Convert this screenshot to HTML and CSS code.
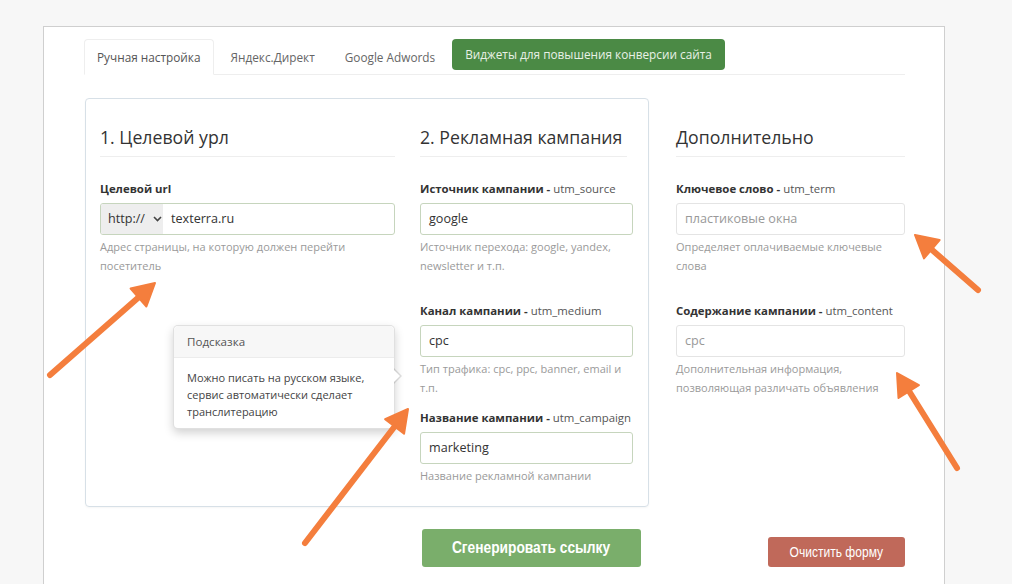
FILE: index.html
```html
<!DOCTYPE html>
<html lang="ru">
<head>
<meta charset="utf-8">
<title>UTM</title>
<link rel="stylesheet" href="styles.css">
</head>
<body>
<div class="card">
  <nav class="tabs">
    <a class="tab active">Ручная настройка</a>
    <a class="tab">Яндекс.Директ</a>
    <a class="tab">Google Adwords</a>
    <a class="tab-btn">Виджеты для повышения конверсии сайта</a>
  </nav>

  <div class="main">
    <div class="box">
      <div class="col col1">
        <h2 class="title">1. Целевой урл</h2>
        <div class="group">
          <div class="label"><b>Целевой url</b></div>
          <div class="input-group">
            <div class="addon">http://
              <svg class="chev" width="9" height="6" viewBox="0 0 9 6"><path d="M1 1l3.5 3.5L8 1" fill="none" stroke="#444" stroke-width="1.6"/></svg>
            </div>
            <div class="field">texterra.ru</div>
          </div>
          <div class="help">Адрес страницы, на которую должен перейти посетитель</div>
        </div>
        <div class="popover">
          <div class="pop-head">Подсказка</div>
          <div class="pop-body">Можно писать на русском языке, сервис автоматически сделает транслитерацию</div>
          <span class="pop-arrow"></span>
        </div>
      </div>

      <div class="col col2">
        <h2 class="title title-short">2. Рекламная кампания</h2>
        <div class="group">
          <div class="label"><b>Источник кампании -</b> utm_source</div>
          <div class="input">google</div>
          <div class="help">Источник перехода: google, yandex, newsletter и т.п.</div>
        </div>
        <div class="group group-wide">
          <div class="label"><b>Канал кампании -</b> utm_medium</div>
          <div class="input">cpc</div>
          <div class="help">Тип трафика: cpc, ppc, banner, email и т.п.</div>
        </div>
        <div class="group group-tight">
          <div class="label"><b>Название кампании -</b> utm_campaign</div>
          <div class="input">marketing</div>
          <div class="help">Название рекламной кампании</div>
        </div>
      </div>
    </div>

    <div class="col col3">
      <h2 class="title">Дополнительно</h2>
      <div class="group">
        <div class="label"><b>Ключевое слово -</b> utm_term</div>
        <div class="input input-empty">пластиковые окна</div>
        <div class="help">Определяет оплачиваемые ключевые слова</div>
      </div>
      <div class="group group-wide">
        <div class="label"><b>Содержание кампании -</b> utm_content</div>
        <div class="input input-empty">cpc</div>
        <div class="help">Дополнительная информация, позволяющая различать объявления</div>
      </div>
    </div>
  </div>

  <div class="actions">
    <button class="btn btn-go"><span>Сгенерировать ссылку</span></button>
    <button class="btn btn-clear"><span>Очистить форму</span></button>
  </div>
</div>

<svg class="arrows" width="1012" height="584" viewBox="0 0 1012 584">
  <g stroke="#f47e3d" stroke-width="6" stroke-linecap="round" fill="#f47e3d" stroke-linejoin="round">
    <line x1="50" y1="375" x2="139" y2="297"/>
    <polygon points="155,283 146.4,306.5 130.6,288.5" stroke-width="2"/>
    <line x1="305" y1="543" x2="395" y2="426"/>
    <polygon points="408,409 404.1,433.7 385.1,419.1" stroke-width="2"/>
    <line x1="978" y1="290" x2="931" y2="249"/>
    <polygon points="915,235 939.6,240 924,258.4" stroke-width="2"/>
    <line x1="957" y1="468" x2="909" y2="391"/>
    <polygon points="897,373 918.9,385.2 898.5,398" stroke-width="2"/>
  </g>
</svg>
</body>
</html>
```

FILE: styles.css
```css
html, body {
  margin: 0;
  padding: 0;
}
body {
  background: #f7f7f7;
  font-family: "Open Sans", "Noto Sans", sans-serif;
  color: #333;
  width: 1012px;
  height: 584px;
  overflow: hidden;
  position: relative;
}
.card {
  margin: 26px 0 0 43px;
  width: 860px;
  height: 545px;
  background: #fff;
  border: 1px solid #cfcfcf;
  border-bottom: 0;
  padding: 12px 0 0 40px;
}
.tabs {
  display: flex;
  align-items: flex-start;
  width: 821px;
  height: 35px;
  border-bottom: 1px solid #eeeeee;
}
.tab {
  font-size: 11.8px;
  line-height: 19px;
  color: #666;
  padding: 8px 13px 7px 12px;
  border: 1px solid transparent;
  border-radius: 4px 4px 0 0;
  margin-right: 3px;
}
.tab.active {
  color: #555;
  border-color: #eeeeee #eeeeee #fff;
  background: #fff;
}
.tab-btn {
  height: 31px;
  line-height: 31px;
  padding: 0 13px;
  background: #4b8a45;
  color: #e9f1e7;
  font-size: 11.8px;
  border-radius: 4px;
}
.main {
  display: flex;
  align-items: flex-start;
  margin-top: 23px;
  margin-left: 1px;
}
.box {
  display: flex;
  gap: 25px;
  width: 533px;
  border: 1px solid #d7e0e7;
  border-radius: 4px;
  padding: 25px 15px 21px 14px;
  box-shadow: 0 1px 2px rgba(0,0,0,0.04);
}
.col { position: relative; }
.col1 { width: 295px; }
.col2 { width: 213px; }
.col3 {
  width: 229px;
  margin-left: 27px;
  padding-top: 26px;
}
.title {
  margin: 0;
  font-size: 17.7px;
  font-weight: 400;
  line-height: 26px;
  color: #333;
  padding-bottom: 6px;
  border-bottom: 1px solid #eeeeee;
}
.title-short { margin-right: 6px; }
.group { margin-top: 23px; }
.group-wide { margin-top: 27px; }
.group-tight { margin-top: 12px; }
.label {
  font-size: 11.4px;
  line-height: 18px;
  color: #555;
  margin-bottom: 5px;
  white-space: nowrap;
}
.label b { color: #333; font-weight: 700; }
.input, .input-group {
  box-sizing: border-box;
  height: 32px;
  border: 1px solid #c6d5bd;
  border-radius: 3px;
  font-size: 12.6px;
  line-height: 30px;
  color: #333;
}
.input { padding: 0 8px; }
.input-empty {
  border-color: #e4e4e4;
  color: #999;
}
.input-group {
  display: flex;
  overflow: hidden;
}
.addon {
  width: 62px;
  background: #eeeeee;
  padding-left: 7px;
  box-sizing: border-box;
  display: flex;
  align-items: center;
}
.chev { margin-left: 8px; }
.field { padding-left: 8px; }
.help {
  margin-top: 2px;
  font-size: 11px;
  line-height: 19px;
  color: #9a9a9a;
}
.popover {
  position: absolute;
  left: 73px;
  top: 201px;
  width: 222px;
  box-sizing: border-box;
  background: #fff;
  border: 1px solid rgba(0,0,0,0.12);
  border-radius: 5px;
  box-shadow: 0 4px 10px rgba(0,0,0,0.18);
}
.pop-head {
  height: 31px;
  line-height: 31px;
  padding: 0 13px;
  background: #f7f7f7;
  border-bottom: 1px solid #ececec;
  border-radius: 5px 5px 0 0;
  font-size: 11.6px;
  color: #555;
}
.pop-body {
  padding: 11px 13px 8px;
  font-size: 11px;
  line-height: 17px;
  color: #444;
}
.pop-arrow {
  position: absolute;
  right: -8px;
  top: 42px;
  width: 0;
  height: 0;
  border-top: 8px solid transparent;
  border-bottom: 8px solid transparent;
  border-left: 8px solid rgba(0,0,0,0.12);
}
.pop-arrow::after {
  content: "";
  position: absolute;
  left: -9px;
  top: -7px;
  border-top: 7px solid transparent;
  border-bottom: 7px solid transparent;
  border-left: 7px solid #fff;
}
.actions {
  display: flex;
  align-items: flex-end;
  width: 821px;
  margin-top: 22px;
}
.btn {
  border: 0;
  color: #fff;
  font-family: "Liberation Sans", Arial, sans-serif;
  border-radius: 3px;
  padding: 0;
}
.btn span { display: inline-block; }
.btn-go {
  margin-left: 338px;
  width: 219px;
  height: 38px;
  background: #7aae6b;
  font-size: 16px;
  font-weight: 700;
}
.btn-go span { transform: scaleX(0.86); }
.btn-clear {
  margin-left: auto;
  width: 137px;
  height: 30px;
  background: #c0695a;
  font-size: 14px;
}
.btn-clear span { transform: scaleX(0.86); }
.arrows {
  position: absolute;
  left: 0;
  top: 0;
  pointer-events: none;
}
```
